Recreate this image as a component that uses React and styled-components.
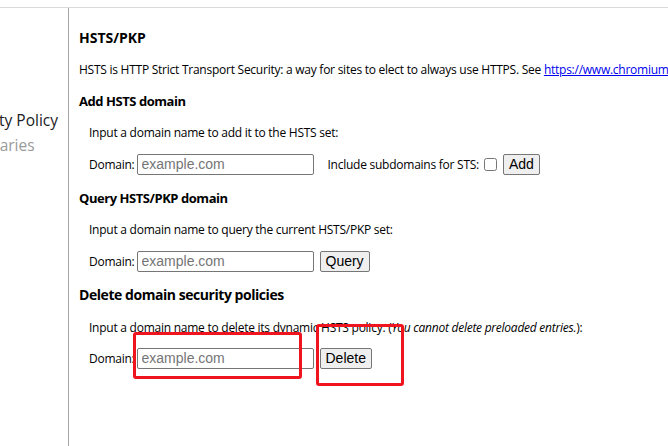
import React from "react"
import styled, { createGlobalStyle } from "styled-components"

const GlobalStyle = createGlobalStyle`
  html, body {
    margin: 0;
    padding: 0;
    background: #fff;
    overflow: hidden;
  }
  body {
    font-family: "Open Sans", "Liberation Sans", sans-serif;
    color: #000;
  }
`

const Page = styled.div`
  position: relative;
  width: 668px;
  height: 446px;
  overflow: hidden;
  padding-top: 7px;
  box-sizing: border-box;
`

const Frame = styled.div`
  display: flex;
  height: 100%;
  border-top: 1px solid #dadada;
`

const Sidebar = styled.nav`
  flex: 0 0 69px;
  border-right: 1px solid #a6a6a6;
  overflow: hidden;
  display: flex;
  flex-direction: column;
  align-items: flex-end;
  padding: 100px 10px 0 0;
  box-sizing: border-box;
`

const NavList = styled.div`
  display: flex;
  flex-direction: column;
  align-items: flex-start;
`

const NavItem = styled.div`
  font-size: 15.5px;
  line-height: 25px;
  white-space: nowrap;
  color: ${p => (p.$active ? "#202124" : "#9a9a9a")};
`

const Content = styled.main`
  flex: 1 1 auto;
  min-width: 0;
  padding: 20px 0 0 10px;
  font-size: 12px;
  letter-spacing: -0.25px;
`

const Title = styled.h2`
  margin: ${p => p.$top || 0}px 0 ${p => p.$after ?? 12}px;
  font-size: ${p => (p.$large ? "14px" : "13px")};
  letter-spacing: ${p => (p.$tight ? "-0.45px" : "0")};
  line-height: 20px;
  font-weight: 700;
`

const Text = styled.p`
  margin: 0 0 ${p => p.$after || 0}px;
  line-height: 20px;
  white-space: nowrap;
  padding-left: ${p => (p.$indent ? "10px" : 0)};
`

const Link = styled.a`
  color: #0000ee;
  text-decoration: underline;
`

const Row = styled.div`
  display: flex;
  align-items: center;
  height: 22px;
  padding-left: 10px;
  white-space: nowrap;
`

const Label = styled.label`
  margin-right: 2px;
`

const DomainInput = styled.input`
  box-sizing: border-box;
  width: 177px;
  height: 21px;
  border: 1px solid #767676;
  border-radius: 2px;
  padding: 1px 4px;
  font-family: "Liberation Sans", Arial, sans-serif;
  font-size: 14px;
  letter-spacing: 0;
  &::placeholder {
    color: #757575;
  }
`

const Spacer = styled.span`
  display: inline-block;
  width: ${p => p.$w}px;
`

const Check = styled.input`
  width: 13px;
  height: 13px;
  margin: 0 0 0 5px;
`

const Button = styled.button`
  box-sizing: border-box;
  height: 21px;
  margin-left: 6px;
  padding: 0 5px;
  border: 1px solid #767676;
  border-radius: 2px;
  background: #efefef;
  font-family: "Liberation Sans", Arial, sans-serif;
  font-size: 14px;
  letter-spacing: 0;
  color: #000;
`

const Mark = styled.div`
  position: absolute;
  border: 3px solid #f0141e;
  border-radius: 3px;
  box-sizing: border-box;
  pointer-events: none;
`

const DomainRow = ({ button, children }) => (
  <Row>
    <Label>Domain:</Label>
    <DomainInput placeholder="example.com" />
    {children}
    <Button>{button}</Button>
  </Row>
)

const App = () => (
  <>
    <GlobalStyle />
    <Page>
      <Frame>
        <Sidebar>
          <NavList>
            <NavItem $active>Domain Security Policy</NavItem>
            <NavItem>Shared Dictionaries</NavItem>
          </NavList>
        </Sidebar>
        <Content>
          <Title $large>HSTS/PKP</Title>
          <Text $after={11}>
            HSTS is HTTP Strict Transport Security: a way for sites to elect to
            always use HTTPS. See{" "}
            <Link href="#">https://www.chromium.org/hsts</Link>
          </Text>

          <Title $tight>Add HSTS domain</Title>
          <Text $indent $after={10}>
            Input a domain name to add it to the HSTS set:
          </Text>
          <DomainRow button="Add">
            <Spacer $w={14} />
            Include subdomains for STS:
            <Check type="checkbox" />
          </DomainRow>

          <Title $tight $top={13}>Query HSTS/PKP domain</Title>
          <Text $indent $after={10}>
            Input a domain name to query the current HSTS/PKP set:
          </Text>
          <DomainRow button="Query" />

          <Title $large $tight $top={13} $after={13}>
            Delete domain security policies
          </Title>
          <Text $indent $after={9}>
            Input a domain name to delete its dynamic HSTS policy. (
            <i>You cannot delete preloaded entries.</i>):
          </Text>
          <DomainRow button="Delete" />
        </Content>
      </Frame>
      <Mark style={{ left: 133, top: 332, width: 169, height: 47 }} />
      <Mark style={{ left: 316, top: 324, width: 88, height: 62 }} />
    </Page>
  </>
)

export default App
